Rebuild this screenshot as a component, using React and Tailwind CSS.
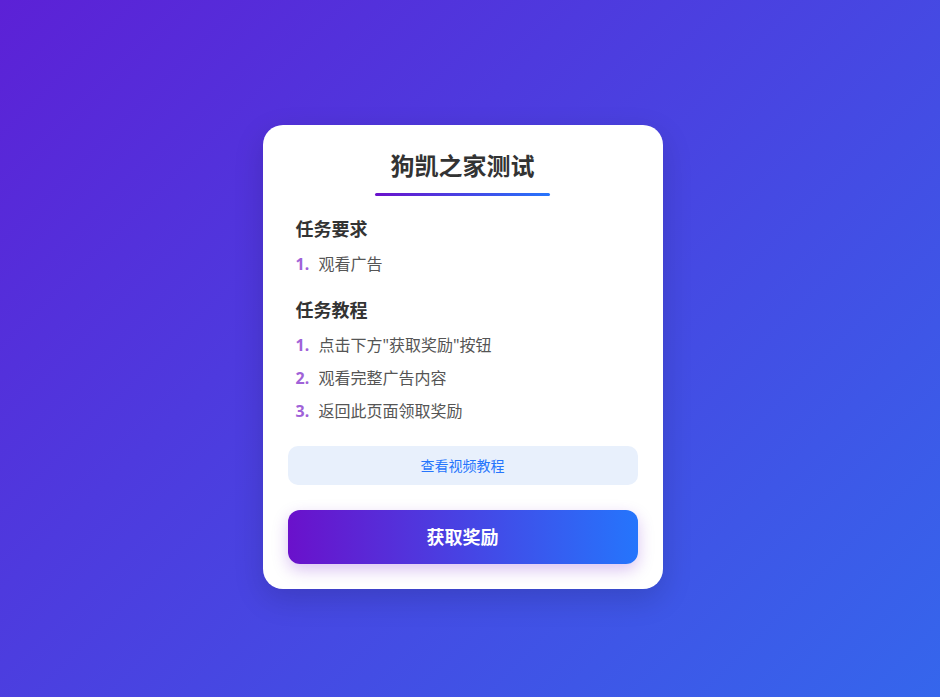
import React from "react";

const font = { fontFamily: '"Noto Sans", "Noto Sans CJK SC", sans-serif' };

function Item({ n, children }) {
  return (
    <li className="flex items-center h-[33px] text-[16px] text-[#555]">
      <span className="w-[23px] text-[16px] font-bold text-[#a062d8]">{n}.</span>
      <span>{children}</span>
    </li>
  );
}

export default function App() {
  return (
    <div
      className="w-full h-[697px] flex items-center justify-center pr-[15px] pt-[17px] bg-[linear-gradient(135deg,#5c21d6,#3566ec)]"
      style={font}
    >
      <div className="w-[400px] h-[464px] bg-white rounded-[20px] shadow-[0_10px_30px_rgba(0,0,0,0.15)] px-[25px] pt-[22px]">
        <h1 className="text-center text-[24px] leading-[38px] font-bold text-[#333]">狗凯之家测试</h1>
        <div className="mx-auto mt-[8px] w-[175px] h-[3px] rounded-full bg-[linear-gradient(90deg,#6a11cb,#2575fc)]" />

        <div className="px-[8px] mt-[20px]">
          <h2 className="text-[18px] leading-[26px] font-bold text-[#333]">任务要求</h2>
          <ul className="mt-[5px]">
            <Item n={1}>观看广告</Item>
          </ul>
          <h2 className="mt-[17px] text-[18px] leading-[26px] font-bold text-[#333]">任务教程</h2>
          <ul className="mt-[5px]">
            <Item n={1}>点击下方"获取奖励"按钮</Item>
            <Item n={2}>观看完整广告内容</Item>
            <Item n={3}>返回此页面领取奖励</Item>
          </ul>
        </div>

        <button className="mt-[19px] w-full h-[39px] rounded-[10px] bg-[#e8f0fc] text-[14px] text-[#2575fc]">
          查看视频教程
        </button>
        <button className="mt-[25px] w-full h-[54px] rounded-[12px] bg-[linear-gradient(90deg,#6a11cb,#2575fc)] text-white text-[18px] font-bold shadow-[0_6px_16px_rgba(106,17,203,0.25)]">
          获取奖励
        </button>
      </div>
    </div>
  );
}
